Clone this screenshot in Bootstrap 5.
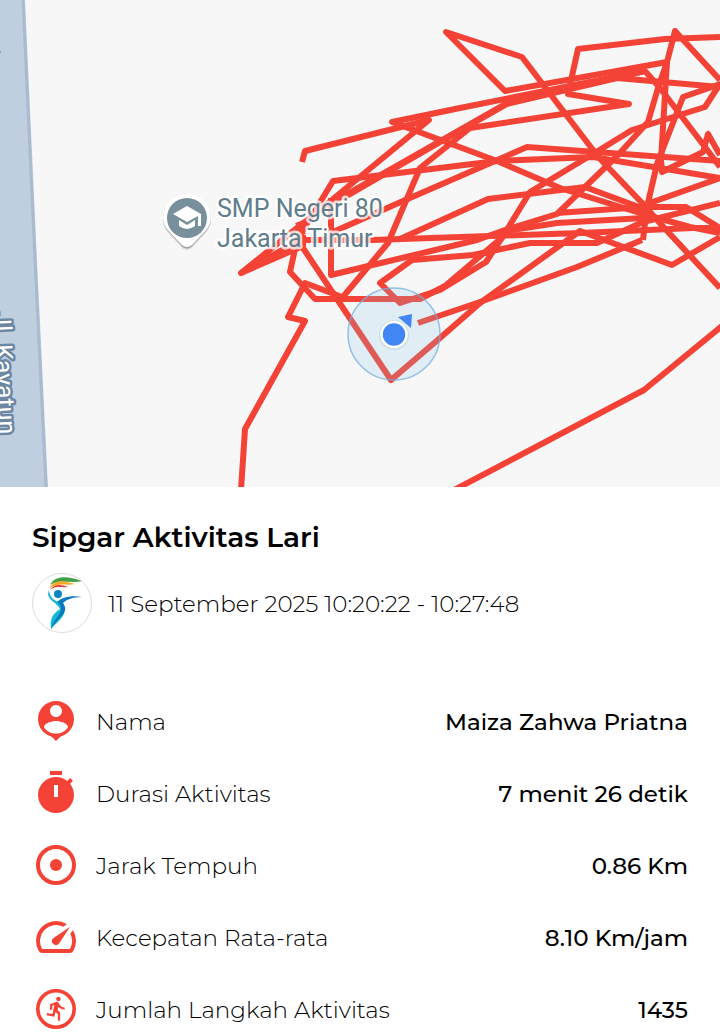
<!DOCTYPE html>
<html lang="id">
<head>
<meta charset="utf-8">
<meta name="viewport" content="width=device-width, initial-scale=1">
<title>Sipgar Aktivitas Lari</title>
<link href="https://cdn.jsdelivr.net/npm/bootstrap@5.3.0/dist/css/bootstrap.min.css" rel="stylesheet">
<style>
  body { font-family: Montserrat, Inter, "Open Sans", sans-serif; color: #000; background: #fff; font-size: 23px; line-height: 32px; }
  .activity-map { background: #f7f7f7; height: auto; }
  .activity-title { font-size: 28px; line-height: 40px; font-weight: 600; }
  .stamp { font-weight: 300; padding-top: 2px; }
  .avatar { width: 60px; height: 60px; }
  .details { padding-top: 30px; }
  .stat-list { gap: 24px; }
  .stat-icon { width: 48px; height: 48px; fill: #f44336; }
  .stat-list dt, .stat-list dd { padding-top: 2px; }
  .stat-list dt { font-weight: 300; }
  .stat-list dd { font-weight: 500; }
  .poi-label { font: 25px Roboto, sans-serif; fill: #5f7d8c; stroke: #fff; stroke-opacity: .8; stroke-width: 5px; stroke-linejoin: round; paint-order: stroke; }
  .road-label { font: 25px Roboto, sans-serif; fill: #fff; stroke: #6d87a1; stroke-width: 5px; stroke-linejoin: round; paint-order: stroke; }
  .route { fill: none; stroke: #f44336; stroke-width: 6px; stroke-linejoin: round; }
</style>
</head>
<body>
<main>
  <svg class="activity-map d-block w-100" viewBox="0 0 720 487" role="img" aria-label="Peta rute lari">
    <path d="M0 0H25L37 260L48 487H0Z" fill="#bfcfe0"/>
    <path d="M23 0L35 260L46 487" fill="none" stroke="#aabbd0" stroke-width="3"/>
    <circle cx="-1" cy="52" r="2" fill="#8ea5bd"/>
    <text class="road-label" transform="translate(-7 312) rotate(87.3)">Jl. Kayatun</text>
    <g class="route">
      <path d="M302 162L305 151L429 120L333 199"/>
      <path d="M720 155L708 134L703 152L662 172L661 160L667 62L675 31L720 80"/>
      <path d="M720 288L657 220L643 204L603 162L593 150L522 57L446 32L505 91L667 62L658 88L648 122L618 155L585 187L557 214L505 230L477 240L360 268L331 275V198"/>
      <path d="M720 167L705 147L660 88L645 71L460 108L392 122L497 161L560 188L643 214L690 227L720 233"/>
      <path d="M720 37L665 39L578 49L568 94L629 104L470 128L420 168L388 243L342 298"/>
      <path d="M720 87L617 78L507 104L442 141L345 197"/>
      <path d="M643 240L647 207L657 164L683 97L720 84L705 107L632 130L593 154L530 192L505 233L486 262L440 290L400 303L380 283L412 260L473 255L530 243L597 243L643 222L720 203"/>
      <path d="M645 71L507 103L442 140L333 202"/>
      <path d="M342 297L305 283L288 317L305 321L245 429L241 490"/>
      <path d="M720 178L593 157L497 161L333 181L297 240L290 272L315 299L420 299L445 286L505 235"/>
      <path d="M720 161L527 147L403 201L333 232"/>
      <path d="M720 178L647 204"/>
      <path d="M400 239L488 199L585 187L647 210"/>
      <path d="M720 228L686 207H643L557 213"/>
      <path d="M643 218L557 223L500 232"/>
      <path d="M720 228H693L580 233L490 236L373 240L300 240L241 273L333 199"/>
      <path d="M241 273L303 246"/>
      <path d="M303 235L298 222"/>
      <path d="M418 323L480 302L577 267L642 240"/>
      <path d="M303 235V248L391 380L440 338L480 303L580 231L672 265L720 237"/>
      <path d="M454 490L644 390L722 326"/>
    </g>
    <circle cx="394" cy="334" r="46" fill="#7ec3ec" fill-opacity=".19" stroke="#75ade0" stroke-opacity=".75" stroke-width="1.5"/>
    <path d="M398 317L412 314L411 328Z" fill="#4285f4"/>
    <circle cx="394" cy="335" r="15" fill="#5a7890" opacity=".14"/>
    <circle cx="394" cy="334.500" r="12.500" fill="#4285f4" stroke="#fff" stroke-width="2.500"/>
    <path d="M187 196a24 24 0 0 0-24 24c0 10 8 15 17 26q7 8 14 0c9-11 17-16 17-26a24 24 0 0 0-24-24Z" fill="#000" opacity=".1"/>
    <path d="M187 195a24 24 0 0 0-24 24c0 10 8 15 17 25q7 9 14 0c9-10 17-15 17-25a24 24 0 0 0-24-24Z" fill="#777" opacity=".6"/>
    <path d="M187 194a24 24 0 0 0-24 24c0 10 8 15 17 25q7 8 14 0c9-10 17-15 17-25a24 24 0 0 0-24-24Z" fill="#fff"/>
    <circle cx="187" cy="218" r="20" fill="#78909c"/>
    <path d="M173 214L187 206L201 214V226H198V216L187 222ZM179 220L187 225L195 220V226Q187 232 179 226Z" fill="#fff"/>
    <text class="poi-label"><tspan x="217" y="217">SMP Negeri 80</tspan><tspan x="217" y="247">Jakarta Timur</tspan></text>
  </svg>

  <section class="details px-4 mx-2 pb-0">
    <h1 class="activity-title mb-3">Sipgar Aktivitas Lari</h1>
    <div class="d-flex align-items-center gap-3 mb-5">
      <svg class="avatar flex-shrink-0" viewBox="0 0 60 60" aria-hidden="true">
        <circle cx="30" cy="30" r="29.500" fill="#fff" stroke="#ddd"/>
        <path d="M18 12C23 2 36 3 50 8C39 11 28 6 18 12Z" fill="#43a047"/>
        <path d="M18 14C25 5 34 9 43 11C34 13 26 9 18 15Z" fill="#f9a825"/>
        <path d="M18 17C23 10 30 12 36 14C29 15 24 12 18 17Z" fill="#e53935"/>
        <path d="M17 17C13 27 24 28 28 36C19 42 18 48 19 56C27 47 36 42 31 33C26 27 18 28 17 17Z" fill="#14b8d4"/>
        <circle cx="26" cy="21" r="4" fill="#0a85c2"/>
        <path d="M25 29C30 24 40 22 50 24C40 24 34 27 31 30C38 40 27 43 19 56C21 47 29 42 29 36Q29 32 25 29Z" fill="#0a79ba"/>
      </svg>
      <span class="stamp">11 September 2025 10:20:22 - 10:27:48</span>
    </div>

    <dl class="stat-list d-flex flex-column mb-0 pt-3">
      <div class="d-flex align-items-center gap-3">
        <svg class="stat-icon flex-shrink-0" viewBox="0 0 24 24" aria-hidden="true"><path d="M12 2c-4.970 0-9 4.030-9 9 0 4.170 2.840 7.670 6.690 8.690L12 22l2.310-2.310C18.160 18.670 21 15.170 21 11c0-4.970-4.030-9-9-9zm0 2c1.660 0 3 1.340 3 3s-1.340 3-3 3-3-1.340-3-3 1.340-3 3-3zm0 14.300c-2.500 0-4.710-1.280-6-3.220.030-1.990 4-3.080 6-3.080 1.990 0 5.970 1.090 6 3.080-1.290 1.940-3.500 3.220-6 3.220z"/></svg>
        <dt>Nama</dt>
        <dd class="ms-auto mb-0 text-end">Maiza Zahwa Priatna</dd>
      </div>
      <div class="d-flex align-items-center gap-3">
        <svg class="stat-icon flex-shrink-0" viewBox="0 0 24 24" aria-hidden="true"><path fill-rule="evenodd" d="M15 1H9v2h6V1zm-4 13h2V8h-2v6zm8.030-6.610 1.420-1.420c-.43-.51-.9-.99-1.410-1.410l-1.420 1.420C16.070 4.740 14.120 4 12 4c-4.970 0-9 4.030-9 9s4.020 9 9 9 9-4.030 9-9c0-2.120-.74-4.070-1.970-5.610z"/></svg>
        <dt>Durasi Aktivitas</dt>
        <dd class="ms-auto mb-0 text-end">7 menit 26 detik</dd>
      </div>
      <div class="d-flex align-items-center gap-3">
        <svg class="stat-icon flex-shrink-0" viewBox="0 0 24 24" aria-hidden="true"><circle cx="12" cy="12" r="9" fill="none" stroke="#f44336" stroke-width="2"/><circle cx="12" cy="12" r="3"/></svg>
        <dt>Jarak Tempuh</dt>
        <dd class="ms-auto mb-0 text-end">0.86 Km</dd>
      </div>
      <div class="d-flex align-items-center gap-3">
        <svg class="stat-icon flex-shrink-0" viewBox="0 0 24 24" aria-hidden="true"><path d="M20.380 8.570l-1.230 1.850a8 8 0 0 1-.22 7.580H5.070A8 8 0 0 1 15.580 6.850l1.850-1.230A10 10 0 0 0 3.350 19a2 2 0 0 0 1.720 1h13.850a2 2 0 0 0 1.740-1 10 10 0 0 0-.27-10.440zm-9.790 6.840a2 2 0 0 0 2.830 0l5.660-8.490-8.490 5.660a2 2 0 0 0 0 2.830z"/></svg>
        <dt>Kecepatan Rata-rata</dt>
        <dd class="ms-auto mb-0 text-end">8.10 Km/jam</dd>
      </div>
      <div class="d-flex align-items-center gap-3">
        <svg class="stat-icon flex-shrink-0" viewBox="0 0 24 24" aria-hidden="true"><circle cx="12" cy="12" r="9.100" fill="none" stroke="#f44336" stroke-width="1.800"/><path transform="translate(5.660 5.050) scale(.56)" d="M13.490 5.480c1.100 0 2-.9 2-2s-.9-2-2-2-2 .9-2 2 .9 2 2 2zm-3.600 13.900l1-4.400 2.100 2v6h2v-7.500l-2.100-2 .6-3c1.300 1.500 3.300 2.500 5.500 2.500v-2c-1.900 0-3.500-1-4.300-2.400l-1-1.600c-.4-.6-1-1-1.700-1-.3 0-.5.1-.8.1l-5.200 2.200v4.700h2v-3.400l1.800-.7-1.600 8.100-4.900-1-.4 2 7 1.400z"/></svg>
        <dt>Jumlah Langkah Aktivitas</dt>
        <dd class="ms-auto mb-0 text-end">1435</dd>
      </div>
    </dl>
  </section>
</main>
<script src="https://cdn.jsdelivr.net/npm/bootstrap@5.3.0/dist/js/bootstrap.bundle.min.js"></script>
</body>
</html>
